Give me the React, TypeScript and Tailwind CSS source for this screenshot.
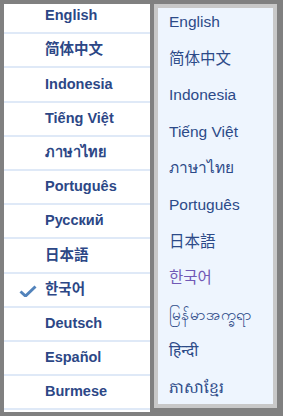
import React from 'react'

const leftItems = [
  'English',
  '简体中文',
  'Indonesia',
  'Tiếng Việt',
  'ภาษาไทย',
  'Português',
  'Русский',
  '日本語',
  '한국어',
  'Deutsch',
  'Español',
  'Burmese',
]

const rightItems = [
  'English',
  '简体中文',
  'Indonesia',
  'Tiếng Việt',
  'ภาษาไทย',
  'Português',
  '日本語',
  '한국어',
  'မြန်မာအက္ခရာ',
  'हिन्दी',
  'ភាសាខ្មែរ',
]

const font = {
  fontFamily: '"Liberation Sans", Arial, "Noto Sans CJK SC", "Noto Sans CJK KR", "Noto Sans", sans-serif',
}

function Check() {
  return (
    <svg width="18" height="12" viewBox="0 0 18 12" className="absolute left-[15px] top-[11px]">
      <path d="M1.5 6.5 L6.5 11 L16.5 1.5" fill="none" stroke="#5283bb" strokeWidth="3" strokeLinejoin="miter" />
    </svg>
  )
}

export default function App() {
  return (
    <div className="w-[283px] h-[416px] bg-[#808080] flex items-start p-1" style={font}>
      {/* selected-language list */}
      <div className="w-[146px] h-[408px] bg-white overflow-hidden shrink-0">
        <div className="-mt-1">
          {leftItems.map((item) => (
            <div
              key={item}
              className="relative h-[34.2px] border-b-2 border-[#dfe9f7] flex items-center pl-[41px] text-[14.5px] font-bold text-[#2c4786]"
            >
              {item === '한국어' && <Check />}
              {item}
            </div>
          ))}
        </div>
      </div>

      {/* dropdown */}
      <div className="ml-1 w-[123px] h-[404px] border-4 border-[#c8c8c8] bg-[#eef5fe] shrink-0 overflow-hidden">
        {rightItems.map((item) => (
          <div
            key={item}
            className={`h-[36.6px] pl-[11px] pt-[5px] text-[15.5px] leading-[18px] ${
              item === '한국어' ? 'text-[#7159b6]' : 'text-[#2c4a88]'
            }`}
          >
            {item}
          </div>
        ))}
      </div>
    </div>
  )
}
